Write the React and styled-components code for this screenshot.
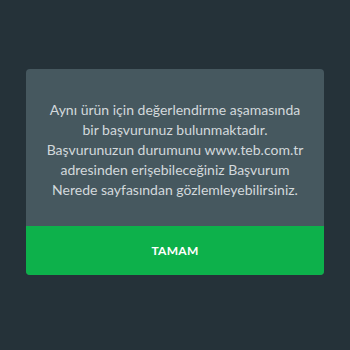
import React from 'react';
import styled, { createGlobalStyle } from 'styled-components';

const GlobalStyle = createGlobalStyle`
  html, body {
    margin: 0;
    padding: 0;
    background: #253239;
  }
  body {
    font-family: Lato, 'Noto Sans', sans-serif;
  }
`;

const Screen = styled.div`
  width: 350px;
  height: 350px;
  display: flex;
  justify-content: center;
  padding-top: 69px;
  box-sizing: border-box;
  background: #253239;
`;

const Dialog = styled.div`
  width: 298px;
  height: 206px;
  display: flex;
  flex-direction: column;
  background: #46585f;
  border-radius: 4px;
  overflow: hidden;
`;

const Message = styled.p`
  flex: 1;
  margin: 0;
  padding: 31px 10px 0;
  font-size: 14px;
  line-height: 20px;
  color: #d3d9dc;
  text-align: center;
`;

const OkButton = styled.button`
  height: 49px;
  border: 0;
  background: #0db14b;
  color: #ffffff;
  font-family: Lato, 'Noto Sans', sans-serif;
  font-weight: 700;
  font-size: 12px;
  letter-spacing: 0.3px;
  cursor: pointer;
  :focus {
    outline: none;
  }
`;

const App = () => (
  <>
    <GlobalStyle />
    <Screen>
      <Dialog>
        <Message>
          Aynı ürün için değerlendirme aşamasında<br />
          bir başvurunuz bulunmaktadır.<br />
          Başvurunuzun durumunu www.teb.com.tr<br />
          adresinden erişebileceğiniz Başvurum<br />
          Nerede sayfasından gözlemleyebilirsiniz.
        </Message>
        <OkButton>TAMAM</OkButton>
      </Dialog>
    </Screen>
  </>
);

export default App;
